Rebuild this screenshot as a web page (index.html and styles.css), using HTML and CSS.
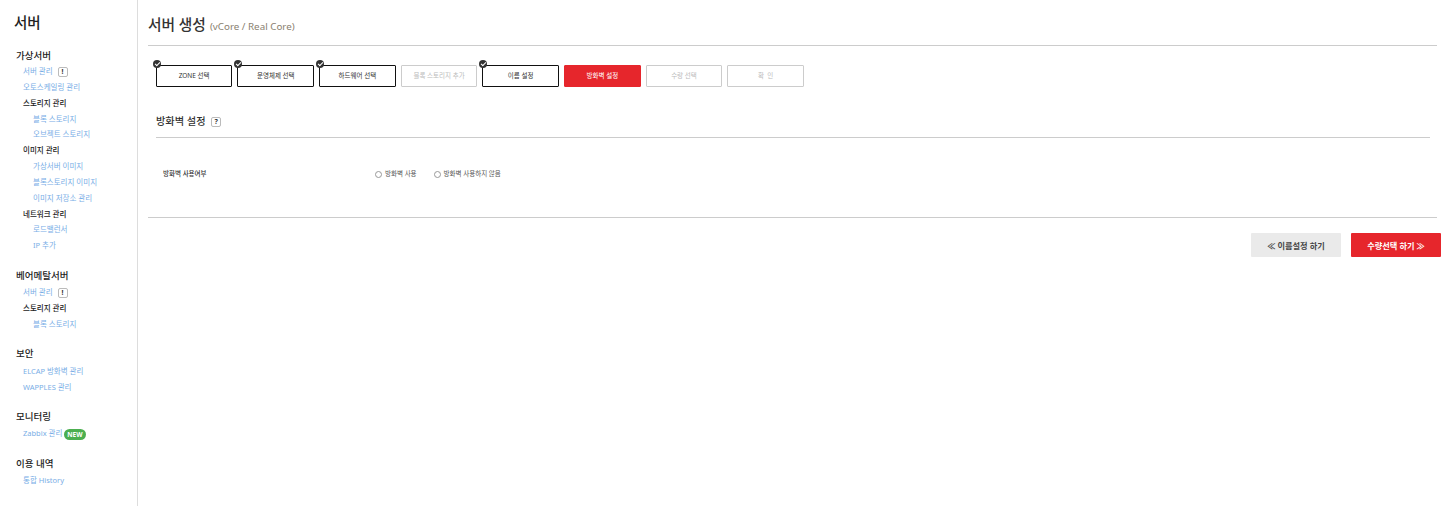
FILE: index.html
```html
<!DOCTYPE html>
<html lang="ko">
  <head>
    <meta charset="UTF-8" />
    <title>서버 생성</title>
    <link rel="stylesheet" href="styles.css">
  </head>
  <body>
    <div class="layout">
      <aside class="sidebar">
        <h1>서버</h1>

        <section class="nav-group">
          <h2>가상서버</h2>
          <a class="nav-link">서버 관리 <span class="info-box">!</span></a>
          <a class="nav-link">오토스케일링 관리</a>
          <strong class="nav-head">스토리지 관리</strong>
          <a class="nav-link sub">블록 스토리지</a>
          <a class="nav-link sub">오브젝트 스토리지</a>
          <strong class="nav-head">이미지 관리</strong>
          <a class="nav-link sub">가상서버 이미지</a>
          <a class="nav-link sub">블록스토리지 이미지</a>
          <a class="nav-link sub">이미지 저장소 관리</a>
          <strong class="nav-head">네트워크 관리</strong>
          <a class="nav-link sub">로드밸런서</a>
          <a class="nav-link sub">IP 추가</a>
        </section>

        <section class="nav-group">
          <h2>베어메탈서버</h2>
          <a class="nav-link">서버 관리 <span class="info-box">!</span></a>
          <strong class="nav-head">스토리지 관리</strong>
          <a class="nav-link sub">블록 스토리지</a>
        </section>

        <section class="nav-group">
          <h2>보안</h2>
          <a class="nav-link">ELCAP 방화벽 관리</a>
          <a class="nav-link">WAPPLES 관리</a>
        </section>

        <section class="nav-group">
          <h2>모니터링</h2>
          <a class="nav-link">Zabbix 관리 <span class="badge-new">NEW</span></a>
        </section>

        <section class="nav-group">
          <h2>이용 내역</h2>
          <a class="nav-link">통합 History</a>
        </section>
      </aside>

      <main class="content">
        <header class="page-title">
          <h1>서버 생성</h1>
          <span class="subtitle">(vCore / Real Core)</span>
        </header>

        <ol class="steps">
          <li class="step done">ZONE 선택</li>
          <li class="step done">운영체제 선택</li>
          <li class="step done">하드웨어 선택</li>
          <li class="step">블록 스토리지 추가</li>
          <li class="step done">이름 설정</li>
          <li class="step active">방화벽 설정</li>
          <li class="step">수량 선택</li>
          <li class="step">확 &nbsp;인</li>
        </ol>

        <section class="panel">
          <h2>방화벽 설정 <span class="help-box">?</span></h2>
          <div class="form-row">
            <div class="form-label">방화벽 사용여부</div>
            <div class="form-options">
              <label><input type="radio" name="fw"> 방화벽 사용</label>
              <label><input type="radio" name="fw"> 방화벽 사용하지 않음</label>
            </div>
          </div>
        </section>

        <div class="actions">
          <button class="btn btn-prev">≪ 이름설정 하기</button>
          <button class="btn btn-next">수량선택 하기 ≫</button>
        </div>
      </main>
    </div>
  </body>
</html>
```

FILE: styles.css
```css
* {
  box-sizing: border-box;
}

body {
  margin: 0;
  font-family: "Noto Sans", "Noto Sans CJK KR", sans-serif;
  background: #fff;
  color: #333;
}

.layout {
  display: flex;
  height: 506px;
  overflow: hidden;
}

.sidebar {
  width: 138px;
  flex: none;
  padding: 12px 0 0 16px;
  border-right: 1px solid #ddd;
}

.sidebar h1 {
  margin: 0 0 15px -2px;
  font-size: 14.5px;
  line-height: 21px;
  font-weight: 500;
  color: #222;
}

.nav-group {
  display: flex;
  flex-direction: column;
  margin-bottom: 13.5px;
}

.nav-group h2 {
  margin: 0 0 1.5px;
  font-size: 9.5px;
  line-height: 16px;
  font-weight: 500;
  color: #222;
}

.nav-group:first-of-type h2 {
  margin-bottom: 0;
}

.nav-link,
.nav-head {
  padding-left: 7px;
  font-size: 7.5px;
  line-height: 15.85px;
  white-space: nowrap;
}

.nav-link {
  color: #79aee6;
}

.nav-link.sub {
  padding-left: 17px;
}

.nav-head {
  font-weight: 500;
  color: #222;
}

.info-box {
  display: inline-block;
  width: 10px;
  height: 10px;
  margin-left: 3px;
  border: 1px solid #bbb;
  border-radius: 2px;
  font-size: 7px;
  line-height: 8px;
  font-weight: 700;
  text-align: center;
  color: #333;
  vertical-align: middle;
}

.badge-new {
  display: inline-block;
  margin: 2px 0;
  padding: 0 3px;
  border-radius: 6px;
  background: #4caf50;
  color: #fff;
  font-size: 6.5px;
  line-height: 11px;
  font-weight: 700;
  vertical-align: middle;
}

.content {
  flex: 1;
  padding: 12px 11px 0 10px;
}

.page-title {
  display: flex;
  align-items: baseline;
  gap: 4px;
  height: 34px;
  margin-right: 4px;
  padding-top: 2px;
  border-bottom: 1px solid #ccc;
}

.page-title h1 {
  margin: 0;
  font-size: 14.7px;
  line-height: 21px;
  font-weight: 500;
  color: #333;
}

.subtitle {
  font-size: 9.8px;
  color: #8a7f70;
}

.steps {
  display: flex;
  gap: 5px;
  margin: 19px 0 0 7.8px;
  padding: 0;
  list-style: none;
}

.step {
  position: relative;
  width: 76.65px;
  height: 22px;
  border: 1px solid #ccc;
  border-radius: 1px;
  font-size: 6.5px;
  line-height: 20px;
  text-align: center;
  color: #bbb;
  white-space: nowrap;
}

.step.done {
  border-color: #111;
  color: #333;
}

.step.done::before {
  content: "";
  position: absolute;
  top: -6px;
  left: -4px;
  width: 8px;
  height: 8px;
  border-radius: 50%;
  background: #333;
}

.step.done::after {
  content: "";
  position: absolute;
  top: -4px;
  left: -2px;
  width: 4px;
  height: 2px;
  border-left: 1px solid #fff;
  border-bottom: 1px solid #fff;
  transform: rotate(-45deg);
}

.step.active {
  border-color: #e6262c;
  background: #e6262c;
  color: #fff;
}

.panel {
  margin: 0 11px 0 8px;
}

.panel h2 {
  height: 51px;
  margin: 0;
  padding-top: 26px;
  border-bottom: 1px solid #ccc;
  font-size: 10.2px;
  line-height: 16px;
  font-weight: 500;
  color: #333;
}

.help-box {
  display: inline-block;
  width: 10px;
  height: 10px;
  margin-left: 3px;
  border: 1px solid #bbb;
  border-radius: 2px;
  font-size: 7px;
  line-height: 8px;
  font-weight: 700;
  text-align: center;
  vertical-align: middle;
}

.form-row {
  display: flex;
  align-items: flex-start;
  height: 79px;
  padding: 29px 0 0 7px;
  font-size: 6.5px;
  line-height: 14px;
}

.form-label {
  width: 212px;
  font-weight: 500;
  color: #333;
}

.form-options {
  display: flex;
  gap: 17px;
  color: #555;
}

.form-options label {
  display: flex;
  align-items: center;
  gap: 3px;
}

.form-options input {
  appearance: none;
  width: 7px;
  height: 7px;
  margin: 0;
  border: 1px solid #999;
  border-radius: 50%;
}

.actions {
  display: flex;
  justify-content: flex-end;
  gap: 10px;
  margin-right: 4px;
  padding-top: 15px;
  border-top: 1px solid #ccc;
}

.btn {
  width: 90px;
  height: 24px;
  border: none;
  border-radius: 1px;
  font-family: inherit;
  font-size: 8.2px;
  font-weight: 700;
}

.btn-prev {
  background: #eaeaea;
  color: #444;
}

.btn-next {
  margin-right: -4px;
  background: #e6262c;
  color: #fff;
}
```
